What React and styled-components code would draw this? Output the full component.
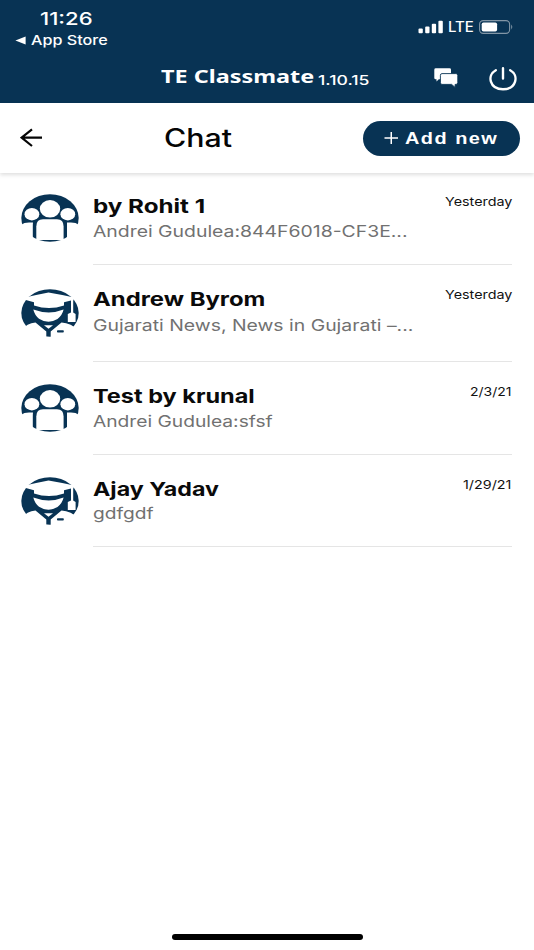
import React, { useLayoutEffect, useRef, useState } from "react";
import styled, { createGlobalStyle } from "styled-components";

const NAVY = "#083354";

const GlobalStyle = createGlobalStyle`
  *, *::before, *::after { box-sizing: border-box; }
  body { margin: 0; background: #fff; overflow: hidden; font-family: Inter, "Noto Sans", sans-serif; }
  svg { display: block; flex: none; }
`;

const Screen = styled.main`
  width: 534px;
  height: 950px;
  display: flex;
  flex-direction: column;
  background: #fff;
`;

const LabelBox = styled.div`
  flex: none;
  width: ${(p) => p.$width}px;
  height: ${(p) => p.$line}px;
  line-height: ${(p) => p.$line}px;
  white-space: nowrap;
`;

const LabelText = styled.span`
  display: inline-block;
  vertical-align: top;
  transform-origin: left center;
`;

/* Text on one line, widened to fill a given width. */
function WideText({ width, line, className, children }) {
  const ref = useRef(null);
  const [scale, setScale] = useState(1);
  useLayoutEffect(() => {
    setScale(width / ref.current.offsetWidth);
  }, [width, children]);
  return (
    <LabelBox className={className} $width={width} $line={line}>
      <LabelText ref={ref} style={{ transform: `scaleX(${scale})` }}>{children}</LabelText>
    </LabelBox>
  );
}

const TopBar = styled.header`
  flex: none;
  height: 103px;
  background: ${NAVY};
  color: #fff;
`;

const StatusBar = styled.div`
  height: 53px;
  display: flex;
  justify-content: space-between;
  padding: 8px 20px 0 15px;
`;

const Clock = styled(WideText)`
  margin-left: 25px;
  font-size: 17.5px;
  font-weight: 500;
`;

const BackToApp = styled.div`
  display: flex;
  align-items: center;
  gap: 5px;
  margin-top: 2px;
`;

const BackAppName = styled(WideText)`
  font-size: 13px;
  font-weight: 500;
`;

const StatusIcons = styled.div`
  display: flex;
  align-items: center;
  height: 38px;
`;

const Network = styled(WideText)`
  margin: 0 5px 0 4px;
  font-size: 13.8px;
  font-weight: 500;
`;

const AppBar = styled.div`
  height: 50px;
  display: flex;
  align-items: center;
  padding: 0 17px 0 161px;
`;

const AppName = styled(WideText)`
  margin-bottom: 4px;
  font-family: "Noto Sans", "Open Sans", sans-serif;
  font-size: 18.5px;
  font-weight: 700;
`;

const Version = styled(WideText)`
  margin: 3px 65px 0 4px;
  font-size: 13.5px;
  font-weight: 500;
`;

const PageBar = styled.div`
  flex: none;
  height: 70px;
  display: flex;
  align-items: center;
  padding: 0 14px 0 20px;
  background: #fff;
  box-shadow: 0 2px 4px rgba(0, 0, 0, 0.13);
`;

const PageTitle = styled(WideText)`
  margin: 0 131px 1px 121px;
  font-size: 25.4px;
  font-weight: 500;
  color: #050505;
`;

const AddButton = styled.button`
  width: 157px;
  height: 35px;
  display: flex;
  align-items: center;
  gap: 6px;
  padding: 0 0 0 21px;
  border: 0;
  border-radius: 18px;
  background: ${NAVY};
  color: #fff;
  text-align: left;
`;

const AddText = styled(WideText)`
  font-family: "Liberation Sans", Arial, sans-serif;
  font-size: 16.3px;
  font-weight: 700;
  letter-spacing: 1.2px;
`;

const List = styled.ul`
  flex: 1;
  margin: 0;
  padding: 0 22px 0 21px;
  list-style: none;
`;

const Row = styled.li`
  height: ${(p) => p.$height}px;
  display: flex;
  align-items: flex-end;
  gap: 14px;
`;

const Avatar = styled.div`
  flex: none;
  margin-bottom: ${(p) => p.$lift}px;
`;

const RowBody = styled.div`
  flex: 1;
  height: ${(p) => p.$height}px;
  display: flex;
  justify-content: space-between;
  border-bottom: 1px solid #e5e5e5;
`;

const Name = styled(WideText)`
  font-size: 19px;
  font-weight: 650;
  color: #0a0a0a;
`;

const Preview = styled(WideText)`
  font-size: 16px;
  color: #717171;
`;

const When = styled(WideText)`
  font-size: 12px;
  font-weight: 400;
  color: #111;
`;

const HomeArea = styled.footer`
  flex: none;
  height: 16px;
  display: flex;
  justify-content: center;
`;

const HomeBar = styled.div`
  width: 191px;
  height: 6px;
  border-radius: 3px;
  background: #000;
`;

const SignalIcon = () => (
  <svg width="26" height="14" viewBox="0 0 26 14" fill="#fff">
    <rect x="0.5" y="8.6" width="4.3" height="4.6" rx="1" />
    <rect x="7.2" y="6.6" width="4.3" height="6.6" rx="1" />
    <rect x="13.8" y="3.8" width="4.3" height="9.4" rx="1" />
    <rect x="20.4" y="0.8" width="4.4" height="12.4" rx="1" />
  </svg>
);

const BatteryIcon = () => (
  <svg width="35" height="14" viewBox="0 0 35 14">
    <rect x="0.6" y="0.6" width="30" height="12.8" rx="3.6" fill="none" stroke="#8296a6" strokeWidth="1.1" />
    <rect x="2.7" y="2.4" width="15.4" height="9.2" rx="1.8" fill="#fff" />
    <path d="M32.2 4.6Q34.4 7 32.2 9.4Z" fill="#8296a6" />
  </svg>
);

const TriangleIcon = () => (
  <svg width="11" height="9" viewBox="0 0 11 9">
    <path d="M0.4 4.5L10.6 0.4V8.6Z" fill="#fff" />
  </svg>
);

const ChatIcon = () => (
  <svg width="25" height="20" viewBox="0 0 25 20">
    <path d="M1.8 0.3H15.5Q17 .3 17 1.7V10Q17 11.3 15.5 11.3H4.8L2.5 13.5V11.3H1.8Q.3 11.3 .3 10V1.7Q.3 .3 1.8 .3Z" fill="#fff" />
    <path d="M8 5.6H21.9Q23.8 5.6 23.8 7.3V14.8Q23.8 16.4 21.9 16.4H21.1V19.4L17.6 16.4H8Q6.4 16.4 6.4 14.8V7.3Q6.4 5.6 8 5.6Z" fill="#fff" stroke={NAVY} strokeWidth=".9" />
  </svg>
);

const PowerIcon = styled.svg.attrs({
  width: 28,
  height: 24,
  viewBox: "0 0 28 24",
  fill: "none",
  stroke: "#fff",
  strokeWidth: 2.4,
  strokeLinecap: "round",
})`
  margin: 1px 0 0 30px;
`;

const BackIcon = () => (
  <svg width="23" height="20" viewBox="0 0 23 20" fill="none" stroke="#050505" strokeWidth="2.2">
    <path d="M22 9.7H2M12 1.4L1.6 9.7L12 18" />
  </svg>
);

const PlusIcon = () => (
  <svg width="15" height="12" viewBox="0 0 15 12" stroke="#fff" strokeWidth="1.5">
    <path d="M0.5 6H14M7.25 0V12" />
  </svg>
);

const GroupAvatar = () => (
  <svg width="58" height="48" viewBox="0 0 58 48">
    <ellipse cx="29" cy="24" rx="28.7" ry="23.7" fill={NAVY} />
    <g fill="#fff">
      <ellipse cx="10.9" cy="20.2" rx="7.4" ry="6.2" />
      <ellipse cx="46.8" cy="20.2" rx="7.4" ry="6.2" />
      <path d="M-1 32Q2 28.6 8 28.6H12Q11.8 30 11.8 33V48H-1ZM59 32Q56 28.6 50 28.6H46Q46 30 46 33V48H59Z" />
      <ellipse cx="29" cy="14.8" rx="10.2" ry="8.7" />
      <path d="M15.3 46V32.5Q15.3 25.3 22 25.3H36Q42.6 25.3 42.6 32.5V46Z" />
    </g>
  </svg>
);

const StudentAvatar = () => (
  <svg width="58" height="48" viewBox="0 0 58 48">
    <ellipse cx="29" cy="24" rx="28.7" ry="23.7" fill={NAVY} />
    <g fill="#fff">
      <path d="M5 8.2Q16 5.6 27.5 3.4Q41 5.6 53.2 8.6L52.2 12V23.5L54.6 25V33H46.8V25L50 23.5V11.6L43 13.2V16.5Q28 21.5 13 16.5V13.2L3 10.5Z" />
      <path d="M12.3 20.6Q28 26.4 42.6 20.6Q41.3 26.4 36.5 30Q31.7 32.8 27.5 32.8Q22.5 32.8 18 29.8Q13.7 26.4 12.3 20.6Z" />
      <path d="M0 42Q6 34 14.5 33.6L25.3 42.5V49H0ZM58 42Q50 34 40.5 33.6L29.7 42.5V49H58Z" />
      <path d="M23 36.2H32L27.5 39.8Z" />
    </g>
    <rect x="36" y="41.2" width="6.8" height="2.4" rx=".8" fill={NAVY} />
  </svg>
);

const chats = [
  { name: "by Rohit 1", nameW: 112, text: "Andrei Gudulea:844F6018-CF3E...", textW: 315, when: "Yesterday", whenW: 67, kind: "group", height: 92, body: 71, lift: 23, textLine: 24 },
  { name: "Andrew Byrom", nameW: 172, text: "Gujarati News, News in Gujarati –...", textW: 320, when: "Yesterday", whenW: 67, kind: "student", height: 97, body: 75, lift: 25, textLine: 26 },
  { name: "Test by krunal", nameW: 162, text: "Andrei Gudulea:sfsf", textW: 180, when: "2/3/21", whenW: 42, kind: "group", height: 93, body: 71, lift: 23, textLine: 24 },
  { name: "Ajay Yadav", nameW: 126, text: "gdfgdf", textW: 61, when: "1/29/21", whenW: 49, kind: "student", height: 92, body: 70, lift: 22, textLine: 23 },
];

function ChatRow({ chat }) {
  return (
    <Row $height={chat.height}>
      <Avatar $lift={chat.lift}>{chat.kind === "group" ? <GroupAvatar /> : <StudentAvatar />}</Avatar>
      <RowBody $height={chat.body}>
        <div>
          <Name width={chat.nameW} line={25}>{chat.name}</Name>
          <Preview width={chat.textW} line={chat.textLine}>{chat.text}</Preview>
        </div>
        <When width={chat.whenW} line={15}>{chat.when}</When>
      </RowBody>
    </Row>
  );
}

export default function App() {
  return (
    <>
      <GlobalStyle />
      <Screen>
        <TopBar>
          <StatusBar>
            <div>
              <Clock width={53} line={22}>11:26</Clock>
              <BackToApp>
                <TriangleIcon />
                <BackAppName width={77} line={17}>App Store</BackAppName>
              </BackToApp>
            </div>
            <StatusIcons>
              <SignalIcon />
              <Network width={26} line={18}>LTE</Network>
              <BatteryIcon />
            </StatusIcons>
          </StatusBar>
          <AppBar>
            <AppName width={153} line={26}>TE Classmate</AppName>
            <Version width={51} line={18}>1.10.15</Version>
            <ChatIcon />
            <PowerIcon>
              <path d="M14 1.3V11.6M6.8 3.2C-2.3 8.2 .5 22.2 14 22.2S30.3 8.2 21.2 3.2" />
            </PowerIcon>
          </AppBar>
        </TopBar>
        <PageBar>
          <BackIcon />
          <PageTitle width={68} line={34}>Chat</PageTitle>
          <AddButton>
            <PlusIcon />
            <AddText width={93} line={20}>Add new</AddText>
          </AddButton>
        </PageBar>
        <List>
          {chats.map((chat) => <ChatRow key={chat.name} chat={chat} />)}
        </List>
        <HomeArea><HomeBar /></HomeArea>
      </Screen>
    </>
  );
}
